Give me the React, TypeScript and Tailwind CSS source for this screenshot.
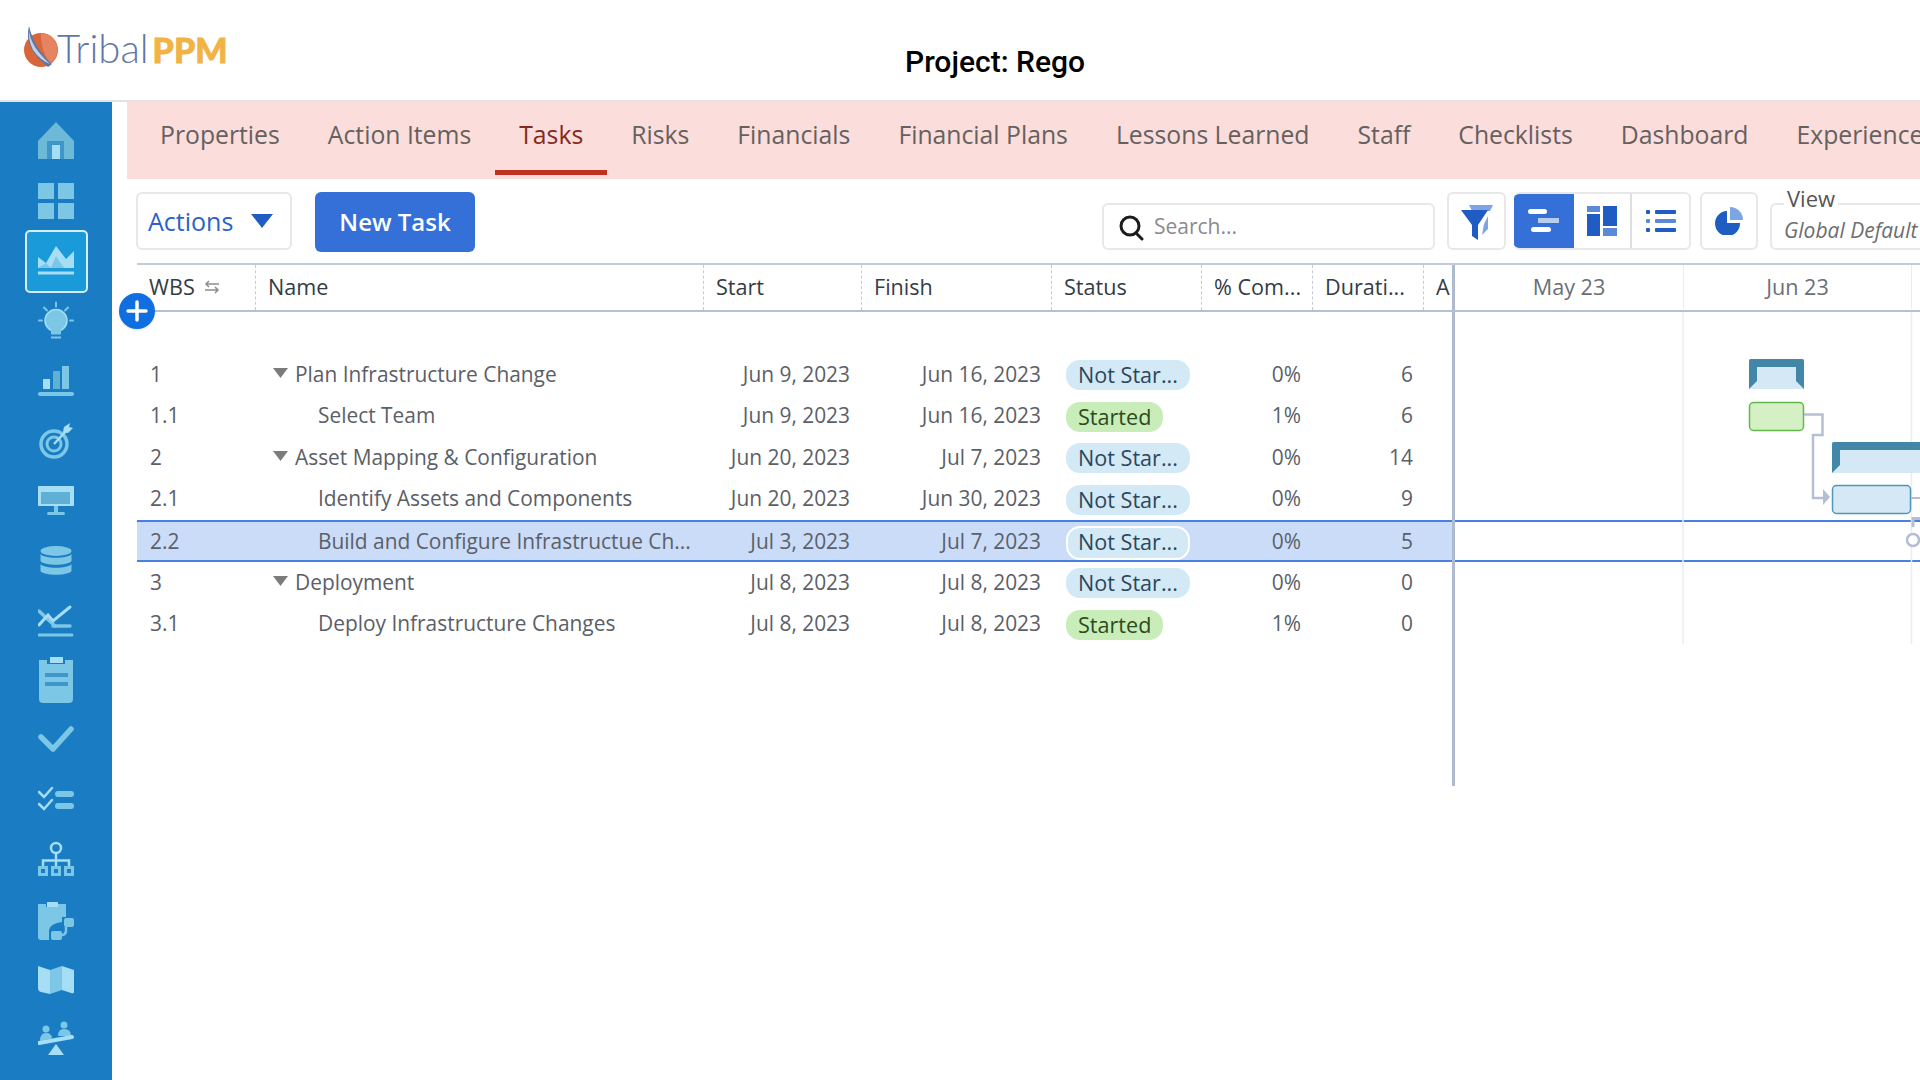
const OPEN = "font-['Open_Sans',sans-serif]";

const tabs = [
  "Properties",
  "Action Items",
  "Tasks",
  "Risks",
  "Financials",
  "Financial Plans",
  "Lessons Learned",
  "Staff",
  "Checklists",
  "Dashboard",
  "Experience",
];

const rows = [
  { wbs: "1", name: "Plan Infrastructure Change", start: "Jun 9, 2023", finish: "Jun 16, 2023", status: "Not Star...", pct: "0%", dur: "6", parent: true },
  { wbs: "1.1", name: "Select Team", start: "Jun 9, 2023", finish: "Jun 16, 2023", status: "Started", pct: "1%", dur: "6" },
  { wbs: "2", name: "Asset Mapping & Configuration", start: "Jun 20, 2023", finish: "Jul 7, 2023", status: "Not Star...", pct: "0%", dur: "14", parent: true },
  { wbs: "2.1", name: "Identify Assets and Components", start: "Jun 20, 2023", finish: "Jun 30, 2023", status: "Not Star...", pct: "0%", dur: "9" },
  { wbs: "2.2", name: "Build and Configure Infrastructue Ch...", start: "Jul 3, 2023", finish: "Jul 7, 2023", status: "Not Star...", pct: "0%", dur: "5", selected: true },
  { wbs: "3", name: "Deployment", start: "Jul 8, 2023", finish: "Jul 8, 2023", status: "Not Star...", pct: "0%", dur: "0", parent: true },
  { wbs: "3.1", name: "Deploy Infrastructure Changes", start: "Jul 8, 2023", finish: "Jul 8, 2023", status: "Started", pct: "1%", dur: "0" },
];

const L = "#a5def5";
const M = "#7cc6e6";
const D = "#5fb0d4";

const sideIcons = [
  // home
  <g key="home">
    <path d="M18 5 L36 24 V42 H0 V24 Z" fill="#6db9d8" />
    <rect x="9" y="24" width="17" height="18" fill="#3f96c8" />
    <rect x="14" y="28" width="8" height="14" fill={L} />
  </g>,
  // grid
  <g key="grid" fill={M}>
    <rect x="0" y="6" width="16" height="16" />
    <rect x="20" y="6" width="16" height="16" />
    <rect x="0" y="26" width="16" height="16" />
    <rect x="20" y="26" width="16" height="16" />
  </g>,
  // area chart
  <g key="area">
    <path d="M0 20 L8 26 L18 9 L28 22 L36 14 V31 H0 Z" fill={L} />
    <path d="M0 31 L8 26 L13 31 Z M13 31 L18 19 L26 31 Z" fill={M} />
    <rect x="0" y="34.5" width="36" height="3" fill={L} />
  </g>,
  // bulb
  <g key="bulb" transform="translate(0 2.500)">
    <circle cx="18" cy="21" r="11" fill={M} stroke={L} strokeWidth="1.5" />
    <path d="M13 30 H23 V35 H13 Z" fill={M} />
    <rect x="13" y="37" width="10" height="2" fill={M} />
    <g stroke={M} strokeWidth="2" strokeLinecap="round">
      <path d="M18 3 V7" />
      <path d="M6 8 L9 11" />
      <path d="M30 8 L27 11" />
      <path d="M1 21 H4" />
      <path d="M32 21 H35" />
    </g>
  </g>,
  // bars
  <g key="bars" transform="translate(0 5)">
    <rect x="5" y="17" width="7" height="10" fill={L} />
    <rect x="15" y="9" width="7" height="18" fill={D} />
    <rect x="24" y="4" width="7" height="23" fill={M} />
    <rect x="0" y="30" width="36" height="4" rx="2" fill={M} />
  </g>,
  // target
  <g key="target" fill="none">
    <circle cx="16" cy="27" r="13" stroke={M} strokeWidth="3.5" />
    <circle cx="16" cy="27" r="7" stroke={M} strokeWidth="3" />
    <path d="M16 27 L30 12" stroke={L} strokeWidth="2.5" />
    <path d="M26 10 L32 6 L31 10 L35 11 L30 16 L25 15 Z" fill={L} />
  </g>,
  // monitor
  <g key="monitor" transform="translate(0 1)">
    <rect x="0" y="8" width="36" height="20" fill={L} />
    <rect x="3" y="14" width="29" height="12" fill={D} />
    <rect x="16" y="28" width="4" height="7" fill={M} />
    <rect x="9" y="34" width="18" height="3" rx="1.5" fill={M} />
  </g>,
  // database
  <g key="db" fill={M} transform="translate(0 1)">
    <ellipse cx="18" cy="13" rx="15.5" ry="5" />
    <path d="M2.5 16 C6 21 30 21 33.500 16 V23 C30 28 6 28 2.500 23 Z" />
    <path d="M2.5 26 C6 31 30 31 33.500 26 V33 C30 38 6 38 2.500 33 Z" />
  </g>,
  // trend
  <g key="trend" fill="none" strokeLinecap="round" transform="translate(0 2)">
    <path d="M1 12 L17 27" stroke={M} strokeWidth="3.5" />
    <path d="M1 26 L10 16 L15 22 L32 8" stroke={L} strokeWidth="3" />
    <path d="M15 27 H32" stroke={M} strokeWidth="3.5" />
    <path d="M1 36 H34" stroke={M} strokeWidth="3" />
  </g>,
  // clipboard
  <g key="clip">
    <path d="M1 3 H9 V7 H27 V3 H35 V42 Q35 46 31 46 H5 Q1 46 1 42 Z" fill={M} />
    <rect x="12" y="0" width="13" height="6" fill={L} />
    <rect x="7" y="16" width="23" height="4" fill="#3f96c8" />
    <rect x="7" y="25" width="23" height="4" fill="#3f96c8" />
  </g>,
  // check
  <path key="check" d="M3 20 L15 32 L33 12" fill="none" stroke={M} strokeWidth="5.500" strokeLinecap="round" strokeLinejoin="round" />,
  // checklist
  <g key="list">
    <path d="M1 15 L6 20 L14 11" fill="none" stroke={L} strokeWidth="2.500" strokeLinecap="round" />
    <path d="M1 27 L6 32 L14 23" fill="none" stroke={L} strokeWidth="2.500" strokeLinecap="round" />
    <rect x="17" y="14" width="19" height="6" rx="3" fill={M} />
    <rect x="17" y="26" width="19" height="6" rx="3" fill={M} />
  </g>,
  // org
  <g key="org">
    <circle cx="18" cy="11" r="5" fill="none" stroke={L} strokeWidth="2.500" />
    <path d="M18 16 V23 M5 31 V23.500 H31 V31 M18 23 V31" fill="none" stroke={L} strokeWidth="2.500" />
    <g fill="none" stroke={M} strokeWidth="3">
      <rect x="1.500" y="30.500" width="7" height="7" />
      <rect x="14.500" y="30.500" width="7" height="7" />
      <rect x="27.500" y="30.500" width="7" height="7" />
    </g>
  </g>,
  // clipboard flow
  <g key="flow">
    <path d="M0 7 H8 V10 H20 V7 H28 V20 H24 V25 Q13 26 11 33 V43 H3 Q0 43 0 40 Z" fill={M} />
    <rect x="9" y="5" width="11" height="5" fill={L} />
    <rect x="26" y="21" width="10" height="9" rx="2" fill={M} />
    <rect x="13" y="34" width="11" height="9" rx="2" fill={M} />
    <path d="M28 30 V33 Q28 38 24 38" fill="none" stroke={M} strokeWidth="2.500" />
  </g>,
  // map
  <g key="map" transform="translate(0 -1)">
    <path d="M0 10 L12 14 V38 L3 36 Q0 35 0 32 Z" fill={L} />
    <path d="M12 14 L24 10 V34 L12 38 Z" fill={M} />
    <path d="M24 10 L36 14 V36 Q36 38 33 37 L24 34 Z" fill={L} />
  </g>,
  // balance people
  <g key="balance" fill={M}>
    <circle cx="8" cy="12" r="3.500" />
    <path d="M2 24 Q2 16 8 16 Q14 16 14 21.500 Z" />
    <circle cx="26" cy="8" r="3.500" />
    <path d="M20 19 Q20 12 26 12 Q33 12 33 19 Z" />
    <path d="M1 26 L34 20" stroke={L} strokeWidth="4" strokeLinecap="round" />
    <path d="M18 27 L26 38 H10 Z" fill={L} />
  </g>,
];

function Sidebar() {
  return (
    <div className="flex w-[112px] shrink-0 flex-col items-center bg-[#1a7dc3] pt-[9px]">
      {sideIcons.map((icon, i) => (
        <div key={i} className="flex h-[60px] w-full items-center justify-center">
          <div
            className={
              i === 2
                ? "flex h-[63px] w-[63px] items-center justify-center rounded-[5px] border-2 border-[#d7eef9] bg-[#1a9ad9]"
                : "flex h-[48px] w-[36px] items-center justify-center"
            }
          >
            <svg width="36" height="48" viewBox="0 0 36 48">
              {icon}
            </svg>
          </div>
        </div>
      ))}
    </div>
  );
}

function Logo() {
  return (
    <div className="flex items-center">
      <svg width="38" height="42" viewBox="0 0 38 42" className="-mt-[2px] shrink-0">
        <circle cx="21" cy="24" r="17" fill="#d9653a" />
        <path d="M21 7 A17 17 0 0 1 30 38 Q20 22 21 7 Z" fill="#e68461" />
        <path d="M9 0 Q3 22 28 41 L32 38 Q14 22 9 0 Z" fill="#5a78a8" />
        <path d="M9 4 Q10 20 30 38 Q20 34 13 24 Q8 14 9 4 Z" fill="#c5d0e2" />
      </svg>
      <div className="ml-[-1px] flex items-baseline text-[40px] leading-none font-['Lato',sans-serif]">
        <span className="font-light text-[#5f78a6]">Tribal</span>
        <span className="ml-[4px] text-[34px] font-black text-[#f0b344] [-webkit-text-stroke:0.8px_#f0b344]">PPM</span>
      </div>
    </div>
  );
}

function FilterIcon() {
  return (
    <svg width="34" height="38" viewBox="0 0 34 38">
      <path d="M9 3 H33 L30 9 H12 Z" fill="#7ea5e3" />
      <path d="M24 22 L28 14 V27 L22 33 Z" fill="#7ea5e3" />
      <path d="M1 8 H28 L18 23 V38 L12 34 V23 Z" fill="#1f5dc4" />
    </svg>
  );
}

function GanttIcon() {
  return (
    <svg width="32" height="24" viewBox="0 0 32 24">
      <rect x="0" y="0" width="19" height="5" rx="2.500" fill="#fff" />
      <rect x="10" y="9" width="21" height="5" fill="#b7cdf2" />
      <rect x="3" y="18" width="20" height="5" rx="2.500" fill="#fff" />
    </svg>
  );
}

function LayoutIcon() {
  return (
    <svg width="30" height="30" viewBox="0 0 30 30">
      <rect x="0" y="0" width="13" height="6" fill="#5d8ad8" />
      <rect x="0" y="8" width="13" height="22" fill="#1f5dc4" />
      <rect x="16" y="0" width="14" height="20" fill="#1f5dc4" />
      <rect x="16" y="22" width="14" height="8" fill="#5d8ad8" />
    </svg>
  );
}

function ListIcon() {
  return (
    <svg width="30" height="24" viewBox="0 0 30 24">
      <rect x="0" y="1" width="4" height="4" rx="1" fill="#1f5dc4" />
      <rect x="0" y="10" width="4" height="4" rx="1" fill="#5d8ad8" />
      <rect x="0" y="19" width="4" height="4" rx="1" fill="#1f5dc4" />
      <rect x="9" y="1" width="21" height="4" rx="1" fill="#1f5dc4" />
      <rect x="9" y="10" width="21" height="4" rx="1" fill="#5d8ad8" />
      <rect x="9" y="19" width="21" height="4" rx="1" fill="#1f5dc4" />
    </svg>
  );
}

function PieIcon() {
  return (
    <svg width="28" height="28" viewBox="0 0 28 28">
      <path d="M12 4 V16 H25 A12.500 12.500 0 1 1 12 4 Z" fill="#1f5dc4" />
      <path d="M15 0 A13 13 0 0 1 28 13 H15 Z" fill="#7ea5e3" />
    </svg>
  );
}

function Toolbar() {
  return (
    <div className="flex h-[84px] items-start pl-[9px] pt-[13px]">
      <button className={"flex h-[58px] w-[156px] shrink-0 items-center rounded-md border-2 border-[#e8e8e8] pl-[10px] pt-[1px] text-[25px] text-[#2b62c6] " + OPEN}>
        Actions
        <svg width="22" height="14" viewBox="0 0 22 14" className="ml-[18px] -mt-[2px]">
          <path d="M0 0 H22 L11 14 Z" fill="#1f5dc4" />
        </svg>
      </button>
      <button className={"ml-[23px] h-[60px] w-[160px] shrink-0 rounded-md bg-[#3470d8] text-[24px] font-semibold text-white " + OPEN}>
        New Task
      </button>

      <div className="ml-[627px] mt-[11px] flex h-[47px] w-[333px] shrink-0 items-center rounded-md border-2 border-[#e8e8e8] pl-[14px]">
        <svg width="26" height="28" viewBox="0 0 26 28" fill="none" stroke="#1c1c1c" strokeWidth="3">
          <circle cx="12" cy="13" r="9" />
          <path d="M18 20 L24 26" strokeLinecap="round" />
        </svg>
        <span className={"ml-[10px] text-[21px] text-[#8b8b8b] " + OPEN}>Search...</span>
      </div>

      <div className="ml-[12px] flex h-[58px] w-[59px] shrink-0 items-center justify-center rounded-md border-2 border-[#e8e8e8]">
        <FilterIcon />
      </div>

      <div className="ml-[8px] flex h-[58px] w-[177px] shrink-0 overflow-hidden rounded-md border-2 border-l-0 border-[#e8e8e8]">
        <div className="-my-[2px] flex w-[60px] items-center justify-center bg-[#3470d8]">
          <GanttIcon />
        </div>
        <div className="flex w-[58px] items-center justify-center border-r-2 border-[#dedede]">
          <LayoutIcon />
        </div>
        <div className="flex flex-1 items-center justify-center">
          <ListIcon />
        </div>
      </div>

      <div className="ml-[9px] flex h-[58px] w-[58px] shrink-0 items-center justify-center rounded-md border-2 border-[#e8e8e8]">
        <PieIcon />
      </div>

      <div className="relative ml-[12px] mt-[11px] h-[47px] w-[180px] shrink-0 rounded-md border-2 border-[#e8e8e8]">
        <span className={"absolute -top-[22px] left-[12px] bg-white px-[3px] text-[22px] leading-[30px] text-[#555] " + OPEN}>View</span>
        <span className={"absolute left-[12px] top-[13px] whitespace-nowrap text-[21px] leading-[24px] italic text-[#6e6e6e] " + OPEN}>Global Default</span>
      </div>
    </div>
  );
}

const colW = ["w-[119px]", "w-[448px]", "w-[158px]", "w-[190px]", "w-[150px]", "w-[111px]", "w-[111px]", "w-[28px]"];

function HeadCell({ w, children, last }: { w: string; children: React.ReactNode; last?: boolean }) {
  return (
    <div className={w + " flex h-full shrink-0 items-center overflow-hidden whitespace-nowrap pb-[1px] pl-[12px] " + (last ? "" : "border-r border-dashed border-[#c5cbd6]")}>
      {children}
    </div>
  );
}

function StatusPill({ status, selected }: { status: string; selected?: boolean }) {
  const started = status === "Started";
  return (
    <span
      className={
        "flex items-center whitespace-nowrap rounded-[14px] text-[21.600px] " +
        (started ? "w-[97px] bg-[#c9edb9] text-[#2c4a1e]" : "w-[124px] bg-[#d3e9f6] text-[#2c475b]") +
        (selected ? " h-[34px] border-2 border-white px-[10px]" : " h-[30px] px-[12px]")
      }
    >
      {status}
    </span>
  );
}

function TaskRow({ row }: { row: (typeof rows)[number] }) {
  return (
    <div
      className={
        "flex items-center text-[20.900px] text-[#5b6068] " +
        (row.selected ? "h-[42px] border-y-2 border-[#4a80e2] bg-[#cbdcf9] pt-[1px]" : "h-[41.500px] pb-[1px]")
      }
    >
      <div className="w-[119px] shrink-0 pl-[13px]">{row.wbs}</div>
      <div className={"flex w-[448px] shrink-0 items-center whitespace-nowrap " + (row.parent ? "pl-[17px]" : "pl-[62px]")}>
        {row.parent && (
          <svg width="15" height="10" viewBox="0 0 15 10" className="mr-[7px] -mt-[2px]">
            <path d="M0 0 H15 L7.500 10 Z" fill="#7c7c7c" />
          </svg>
        )}
        {row.name}
      </div>
      <div className="w-[158px] shrink-0 pr-[12px] text-right">{row.start}</div>
      <div className="w-[190px] shrink-0 pr-[11px] text-right">{row.finish}</div>
      <div className="mt-[2px] flex w-[150px] shrink-0 pl-[14px]">
        <StatusPill status={row.status} selected={row.selected} />
      </div>
      <div className="w-[111px] shrink-0 pr-[12px] text-right">{row.pct}</div>
      <div className="w-[111px] shrink-0 pr-[11px] text-right">{row.dur}</div>
    </div>
  );
}

function Chart() {
  // timeline is a free canvas starting at x=1455, y=312 in page terms
  const ox = 1455;
  const oy = 312;
  const X = (x: number) => x - ox;
  const Y = (y: number) => y - oy;
  return (
    <svg width="465" height="332" className="absolute left-0 top-0 block">
      <rect x="0" y={Y(520)} width="465" height="2" fill="#4a80e2" />
      <rect x="0" y={Y(560)} width="465" height="2" fill="#4a80e2" />
      <path d={"M" + X(1683) + " 0 V332"} stroke="#e8ecf3" strokeWidth="1.500" />
      <path d={"M" + X(1911.500) + " 0 V332"} stroke="#e8ecf3" strokeWidth="1.500" />

      {/* summary 1 */}
      <rect x={X(1749)} y={Y(359)} width="55" height="30" fill="#d4e9f5" />
      <path d={`M${X(1749)} ${Y(389)} V${Y(361)} Q${X(1749)} ${Y(359)} ${X(1751)} ${Y(359)} H${X(1802)} Q${X(1804)} ${Y(359)} ${X(1804)} ${Y(361)} V${Y(389)} L${X(1796)} ${Y(381)} V${Y(367)} H${X(1757)} V${Y(381)} Z`} fill="#4287a8" />
      {/* task 1.1 */}
      <rect x={X(1749.500)} y={Y(402.500)} width="54" height="28" rx="4" fill="#d5f0c4" stroke="#62b84a" strokeWidth="1.500" />

      {/* connector */}
      <path d={`M${X(1804)} ${Y(414.500)} H${X(1822.500)} V${Y(435)} H${X(1813)} V${Y(498)} H${X(1824)}`} fill="none" stroke="#b5bed3" strokeWidth="2.500" />
      <path d={`M${X(1823)} ${Y(489)} L${X(1830)} ${Y(497)} L${X(1823)} ${Y(505)} Z`} fill="#b5bed3" />

      {/* summary 2 */}
      <rect x={X(1832)} y={Y(442)} width="88" height="31" fill="#d4e9f5" />
      <path d={`M${X(1832)} ${Y(473)} V${Y(444)} Q${X(1832)} ${Y(442)} ${X(1834)} ${Y(442)} H${X(1920)} V${Y(450)} H${X(1840)} V${Y(465)} Z`} fill="#4287a8" />
      {/* task 2.1 */}
      <rect x={X(1832.500)} y={Y(485.500)} width="78" height="28" rx="4" fill="#d4e9f5" stroke="#4f97ba" strokeWidth="1.500" />
      <path d={`M${X(1911)} ${Y(498)} H${X(1920)}`} stroke="#b5bed3" strokeWidth="2" />

      {/* milestone start */}
      <path d={`M${X(1913)} ${Y(527)} V${Y(518.500)} H${X(1920)}`} fill="none" stroke="#b5bed3" strokeWidth="3" />
      <circle cx={X(1913)} cy={Y(540)} r="6" fill="#fff" stroke="#b5bed3" strokeWidth="2.500" />
    </svg>
  );
}

export default function App() {
  return (
    <div className={"flex h-screen w-full flex-col overflow-hidden bg-white " + OPEN}>
      {/* top header */}
      <div className="relative flex h-[102px] shrink-0 items-center border-b-2 border-[#e3e3e3] pl-[20px]">
        <div className="-mt-[5px]">
          <Logo />
        </div>
        <div className="absolute left-0 right-[-70px] top-[44px] text-center font-['Roboto',sans-serif] text-[30px] font-medium leading-[36px] text-black">
          Project: Rego
        </div>
      </div>

      <div className="flex min-h-0 flex-1">
        <Sidebar />
        <div className="relative min-w-0 flex-1 overflow-hidden pl-[15px]">
          {/* tabs */}
          <div className="flex h-[77px] items-start overflow-hidden bg-[#fbdedb] pl-[9px]">
            {tabs.map((t) => (
              <div
                key={t}
                className={
                  "flex h-[73px] shrink-0 items-center whitespace-nowrap border-b-[5px] px-[24px] pb-[2px] text-[24.750px] " +
                  (t === "Tasks" ? "border-[#c0321f] text-[#842a1c]" : "border-transparent text-[#66605f]")
                }
              >
                {t}
              </div>
            ))}
          </div>

          <Toolbar />

          {/* grid + gantt */}
          <div className="relative w-[1793px]">
            <div className="ml-[10px] flex h-[49px] items-stretch border-y-2 border-t-[#c3cbda] border-b-[#b4bfd2] text-[21.600px] text-[#343c46]">
              <HeadCell w={colW[0]}>
                WBS
                <svg width="16" height="14" viewBox="0 0 16 14" className="ml-[9px]" fill="none" stroke="#8d8d8d" strokeWidth="1.500">
                  <path d="M15 4 H2 M5 1 L2 4 L5 7" />
                  <path d="M1 10 H14 M11 7 L14 10 L11 13" />
                </svg>
              </HeadCell>
              <HeadCell w={colW[1]}>Name</HeadCell>
              <HeadCell w={colW[2]}>Start</HeadCell>
              <HeadCell w={colW[3]}>Finish</HeadCell>
              <HeadCell w={colW[4]}>Status</HeadCell>
              <HeadCell w={colW[5]}>% Com...</HeadCell>
              <HeadCell w={colW[6]}>Durati...</HeadCell>
              <HeadCell w={colW[7]} last>A</HeadCell>
              <div className="w-[3px] shrink-0 bg-[#aebacd]" />
              <div className="flex flex-1 pb-[1px] text-[#6a6f76]">
                <div className="flex w-[229px] items-center justify-center border-r border-[#e8ecf3]">May 23</div>
                <div className="flex w-[228px] items-center justify-center border-r border-[#e8ecf3]">Jun 23</div>
              </div>
            </div>

            <div className="flex">
              <div className="ml-[10px] w-[1315px] shrink-0 pt-[42px]">
                {rows.map((r) => (
                  <TaskRow key={r.wbs} row={r} />
                ))}
              </div>
              <div className="h-[474px] w-[3px] shrink-0 bg-[#aebacd]" />
              <div className="relative h-[332px] flex-1 overflow-hidden">
                <Chart />
              </div>
            </div>

            {/* add row button */}
            <div className="absolute left-[-8px] top-[30px] flex h-[36px] w-[36px] items-center justify-center rounded-full bg-[#0f6fe0] shadow-sm">
              <svg width="22" height="22" viewBox="0 0 22 22">
                <path d="M11 2 V20 M2 11 H20" stroke="#fff" strokeWidth="3.500" strokeLinecap="round" />
              </svg>
            </div>
          </div>
        </div>
      </div>
    </div>
  );
}
